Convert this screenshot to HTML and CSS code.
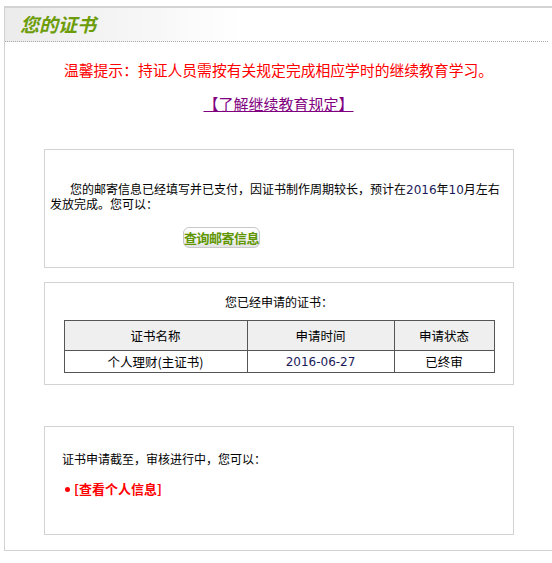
FILE: index.html
```html
<!DOCTYPE html>
<html lang="zh-CN">
<head>
    <meta charset="UTF-8">
    <title>您的证书</title>
    <link rel="stylesheet" href="styles.css">
</head>
<body>
    <div class="main">
        <div class="title-bar">
            <h2>您的证书</h2>
        </div>
        <p class="notice">温馨提示：持证人员需按有关规定完成相应学时的继续教育学习。</p>
        <p class="rule-link"><a href="#">【了解继续教育规定】</a></p>

        <div class="box box-mail">
            <p class="mail-text">您的邮寄信息已经填写并已支付，因证书制作周期较长，预计在<span class="num">2016</span>年<span class="num">10</span>月左右<br>发放完成。您可以：</p>
            <div class="btn-row">
                <button class="btn-query">查询邮寄信息</button>
            </div>
        </div>

        <div class="box box-list">
            <div class="list-title">您已经申请的证书：</div>
            <table class="cert-table">
                <tr>
                    <th class="col-name">证书名称</th>
                    <th class="col-time">申请时间</th>
                    <th>申请状态</th>
                </tr>
                <tr>
                    <td>个人理财(主证书)</td>
                    <td class="num">2016-06-27</td>
                    <td>已终审</td>
                </tr>
            </table>
        </div>

        <div class="box box-status">
            <p>证书申请截至，审核进行中，您可以：</p>
            <ul class="links">
                <li><a href="#">[查看个人信息]</a></li>
            </ul>
        </div>
    </div>
</body>
</html>
```

FILE: styles.css
```css
body {
    margin: 0;
    padding: 6px 0 0 4px;
    font-family: "Noto Sans CJK SC", "DejaVu Sans", sans-serif;
    font-size: 12px;
    color: #000;
    background-color: white;
}

.main {
    width: 547px;
    border: 1px solid #d3d3d3;
    border-top-width: 2px;
    padding-bottom: 15px;
}

.title-bar {
    height: 33px;
    background: linear-gradient(to right, #ebebeb 0, #ffffff 240px);
    border-bottom: 1px dotted #aaa;
    margin-right: 4px;
}

.title-bar h2 {
    margin: 0;
    padding-left: 15px;
    line-height: 32px;
    font-size: 19px;
    font-style: italic;
    font-weight: bold;
    color: #6d9c0a;
}

.notice {
    margin: 18px 0 0;
    text-align: center;
    font-size: 14.8px;
    line-height: 20px;
    color: #ff0000;
}

.rule-link {
    margin: 14px 0 0;
    text-align: center;
    font-size: 15px;
    line-height: 20px;
}

.rule-link a {
    color: #800080;
}

.box {
    width: 468px;
    margin-left: 39px;
    border: 1px solid #d3d3d3;
}

.box-mail {
    margin-top: 35px;
    height: 117px;
    padding: 0 12px 0 5px;
    width: 451px;
}

.mail-text {
    margin: 31px 0 0;
    text-indent: 20px;
    line-height: 15px;
}

.mail-text .num {
    line-height: 1;
}

.num {
    font-family: "DejaVu Sans", sans-serif;
    color: #1a1a5a;
}

.btn-row {
    margin-top: 16px;
    padding-left: 133px;
}

.btn-query {
    width: 77px;
    height: 21px;
    padding: 0;
    border: 1px solid #c8c8c8;
    border-radius: 6px;
    background: linear-gradient(to bottom, #ffffff, #e4e4e4);
    font-family: "Noto Sans CJK SC", sans-serif;
    font-size: 13px;
    font-weight: bold;
    color: #5f9600;
    white-space: nowrap;
    overflow: visible;
    text-align: center;
    letter-spacing: -0.5px;
}

.box-list {
    margin-top: 14px;
    height: 101px;
}

.list-title {
    margin-top: 10px;
    text-align: center;
    line-height: 17px;
}

.cert-table {
    width: 431px;
    margin: 10px auto 0;
    border-collapse: collapse;
    border: 1px solid #999;
}

.cert-table th,
.cert-table td {
    border: 1px solid #555;
    text-align: center;
    font-weight: normal;
    padding: 0;
}

.cert-table th {
    height: 29px;
    background-color: #efefef;
    font-size: 12.5px;
}

.cert-table td {
    height: 21px;
    font-size: 12.5px;
}

.cert-table .num {
    font-size: 12px;
}

.col-name {
    width: 182px;
}

.col-time {
    width: 146px;
}

.box-status {
    margin-top: 41px;
    height: 107px;
    padding-left: 17px;
    width: 451px;
}

.box-status p {
    margin: 23px 0 0;
    line-height: 17px;
}

.links {
    margin: 13px 0 0;
    padding: 0;
    list-style: none;
}

.links li {
    line-height: 17px;
}

.links li::before {
    content: "";
    display: inline-block;
    width: 5px;
    height: 5px;
    border-radius: 50%;
    background-color: #ff0000;
    margin: 0 4px 2px 3px;
    vertical-align: middle;
}

.links a {
    color: #ff0000;
    font-weight: bold;
    font-size: 13px;
    text-decoration: none;
}
```
